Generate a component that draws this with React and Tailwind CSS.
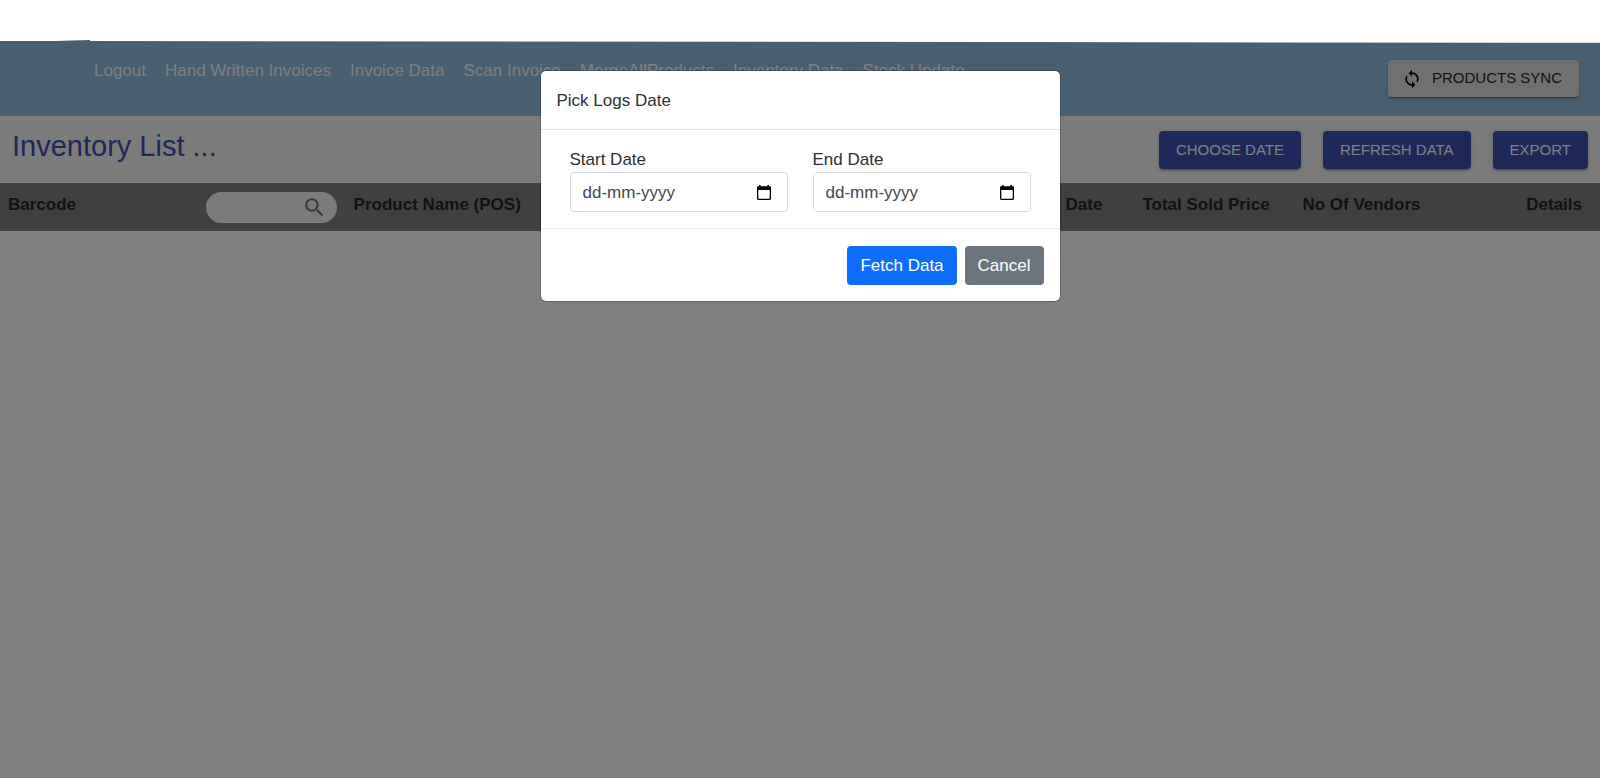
import { useState } from 'react';
import { MdSearch, MdSync } from 'react-icons/md';

const navLinks = [
  'Logout',
  'Hand Written Invoices',
  'Invoice Data',
  'Scan Invoice',
  'MergeAllProducts',
  'Inventory Data',
  'Stock Update',
];

const raised = 'shadow-[0_3px_1px_-2px_rgba(0,0,0,0.2),0_2px_2px_rgba(0,0,0,0.14),0_1px_5px_rgba(0,0,0,0.12)]';

function ActionButton({ children, onClick }) {
  return (
    <button
      type="button"
      onClick={onClick}
      className={`h-[38px] rounded bg-[#3f51b5] px-[17px] text-[15px] text-white uppercase ${raised}`}
    >
      {children}
    </button>
  );
}

function NavBar() {
  return (
    <header className="flex h-[76px] items-start justify-between bg-[#92c0e4] pr-[21px] pl-[94px]">
      <nav className="flex gap-[19px] pt-[18px] text-[17px] leading-[25px] text-white">
        {navLinks.map((link) => (
          <a key={link} href="#" className="whitespace-nowrap">
            {link}
          </a>
        ))}
      </nav>
      <button
        type="button"
        className={`mt-5 flex h-[37px] items-center gap-[10px] rounded bg-[#e0e0e0] pr-[17px] pl-[14px] text-[15px] text-black/87 uppercase ${raised}`}
      >
        <MdSync className="size-5 text-black" />
        Products Sync
      </button>
    </header>
  );
}

function InventoryTable() {
  return (
    <table className="w-full table-fixed text-[17px] leading-[25px] text-[#212529]">
      <colgroup>
        <col className="w-[21.6%]" />
        <col className="w-[44.5%]" />
        <col className="w-[4.8%]" />
        <col className="w-[10%]" />
        <col className="w-[12%]" />
        <col />
      </colgroup>
      <thead className="bg-[#808080]">
        <tr className="h-12 text-left align-top">
          <th className="pt-[9px] pr-[9px] pl-2">
            <div className="flex items-start justify-between">
              <span>Barcode</span>
              <span className="flex h-[31px] w-[131px] items-center rounded-full bg-[#f6f6f6] px-[10px]">
                <input type="text" aria-label="Search barcode" className="w-full min-w-0 bg-transparent font-normal outline-none" />
                <MdSearch className="size-[25px] shrink-0 text-[#757575]" />
              </span>
            </div>
          </th>
          <th className="px-2 pt-[9px]">Product Name (POS)</th>
          <th className="px-2 pt-[9px]">Date</th>
          <th className="px-2 pt-[9px] whitespace-nowrap">Total Sold Price</th>
          <th className="px-2 pt-[9px]">No Of Vendors</th>
          <th className="pt-[9px] pr-[18px] text-right">Details</th>
        </tr>
      </thead>
    </table>
  );
}

function DateField({ id, label, value, onChange }) {
  return (
    <div className="flex-1">
      <label htmlFor={id} className="block">
        {label}
      </label>
      <div className="flex h-10 items-center rounded border border-[#d8dce0] pr-4 pl-3">
        <input
          id={id}
          type="text"
          placeholder="dd-mm-yyyy"
          value={value}
          onChange={(e) => onChange(e.target.value)}
          className="w-full min-w-0 outline-none placeholder:text-[#45494d]"
        />
        <button type="button" aria-label={`Open ${label} calendar`}>
          <svg viewBox="0 0 14 15" className="h-[15px] w-[14px]" fill="#000">
            <path d="M2 0h1.6v1.2h6.8V0H12v1.2h.8c.7 0 1.2.5 1.2 1.2v11.4c0 .7-.5 1.2-1.2 1.2H1.2C.5 15 0 14.5 0 13.8V2.4C0 1.7.5 1.2 1.2 1.2H2zM1.3 5v8.7h11.4V5z" />
          </svg>
        </button>
      </div>
    </div>
  );
}

function LogsDateDialog({ onClose }) {
  const [startDate, setStartDate] = useState('');
  const [endDate, setEndDate] = useState('');

  return (
    <div
      role="dialog"
      aria-labelledby="logs-title"
      className="mx-auto mt-[31px] w-full max-w-[519px] rounded-[5px] bg-white text-[17px] leading-[25px] text-[#2c3034] shadow-[0_0_0_1px_rgba(0,0,0,0.2)]"
    >
      <h2 id="logs-title" className="border-b border-[#dee2e6] px-4 pt-[17px] pb-4">
        Pick Logs Date
      </h2>
      <div className="flex gap-[25px] px-[29px] pt-[17px] pb-4">
        <DateField id="start-date" label="Start Date" value={startDate} onChange={setStartDate} />
        <DateField id="end-date" label="End Date" value={endDate} onChange={setEndDate} />
      </div>
      <div className="flex justify-end gap-2 border-t border-[#e9ecef] px-4 pt-[17px] pb-4">
        <button type="button" className="h-[39px] rounded bg-[#0d6efd] px-[13px] text-white">
          Fetch Data
        </button>
        <button type="button" onClick={onClose} className="h-[39px] rounded bg-[#6c757d] px-[13px] text-white">
          Cancel
        </button>
      </div>
    </div>
  );
}

export default function App() {
  const [open, setOpen] = useState(true);

  return (
    <div className="flex min-h-screen flex-col bg-white pt-10 font-['Liberation_Sans',Arial,sans-serif]">
      <div className="relative flex-1">
        <NavBar />
        <div className="flex h-[67px] items-start justify-between bg-[#f6f6f6] px-3 pt-[15px]">
          <h1 className="text-[29px] leading-[30px] text-[#3f51b5]">Inventory List ...</h1>
          <div className="flex gap-[22px]">
            <ActionButton onClick={() => setOpen(true)}>Choose Date</ActionButton>
            <ActionButton>Refresh Data</ActionButton>
            <ActionButton>Export</ActionButton>
          </div>
        </div>
        <InventoryTable />

        {open && (
          <div className="absolute inset-0 bg-black/50">
            <LogsDateDialog onClose={() => setOpen(false)} />
          </div>
        )}
        {/* slightly slanted upper edge of the bar */}
        <svg
          viewBox="0 0 1600 3"
          preserveAspectRatio="none"
          className="absolute inset-x-0 top-0 h-[3px] w-full"
          aria-hidden="true"
        >
          <path d="M0 0H1600V2.8L90 1V0L55 1H0z" fill="#fff" />
        </svg>
      </div>
    </div>
  );
}
